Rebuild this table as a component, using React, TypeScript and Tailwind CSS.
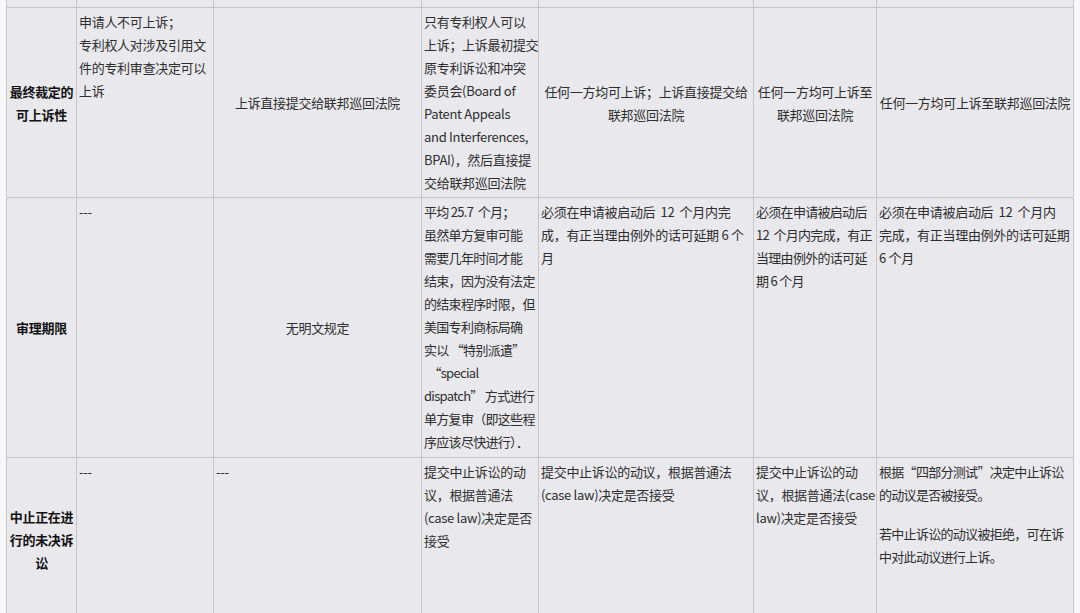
import type { ReactNode } from 'react'

const FONT = '"Noto Sans CJK SC", "Microsoft YaHei", "Liberation Sans", sans-serif'

type Align = 'top' | 'center'

function Cell({ children, align = 'top', center = false, bold = false, tight = false }: {
  children?: ReactNode
  align?: Align
  center?: boolean
  bold?: boolean
  tight?: boolean
}) {
  return (
    <div
      className={`bg-[#e9e8ed] px-[2px] flex flex-col overflow-hidden whitespace-pre ${
        align === 'center' ? 'justify-center' : 'justify-start pt-[2px]'
      } ${center ? 'items-center text-center' : 'items-start'} ${
        bold ? 'font-bold text-[#111]' : 'text-[#2e2e2e]'
      } ${tight ? 'tracking-[-0.7px]' : ''}`}
    >
      {children}
    </div>
  )
}

function Lines({ lines }: { lines: string[] }) {
  return (
    <div>
      {lines.map((l, i) => (
        <div key={i}>{l}</div>
      ))}
    </div>
  )
}

export default function App() {
  return (
    <div className="w-[1080px] h-[613px] overflow-hidden bg-[#f7f7f9]" style={{ fontFamily: FONT }}>
      <div className="ml-[6px] w-[1068px] border-x border-[#c6c6ca] bg-[#c6c6ca] grid grid-cols-[69px_136px_207px_116px_214px_122px_196px] grid-rows-[7px_189px_259px_162px] gap-px text-[13px] leading-[23px] tracking-[-0.3px]">
        {/* previous row (cut off) */}
        {[0, 1, 2, 3, 4, 5, 6].map(i => (
          <div key={i} className="bg-[#e9e8ed]" />
        ))}

        {/* 最终裁定的可上诉性 */}
        <Cell align="center" center bold>
          <Lines lines={['最终裁定的', '可上诉性']} />
        </Cell>
        <Cell>
          <Lines lines={['申请人不可上诉；', '专利权人对涉及引用文', '件的专利审查决定可以', '上诉']} />
        </Cell>
        <Cell align="center" center>
          <Lines lines={['上诉直接提交给联邦巡回法院']} />
        </Cell>
        <Cell>
          <Lines
            lines={[
              '只有专利权人可以',
              '上诉；上诉最初提交',
              '原专利诉讼和冲突',
              '委员会(Board of',
              'Patent Appeals',
              'and Interferences,',
              'BPAI)，然后直接提',
              '交给联邦巡回法院',
            ]}
          />
        </Cell>
        <Cell align="center" center>
          <Lines lines={['任何一方均可上诉；上诉直接提交给', '联邦巡回法院']} />
        </Cell>
        <Cell align="center" center>
          <Lines lines={['任何一方均可上诉至', '联邦巡回法院']} />
        </Cell>
        <Cell align="center" center>
          <Lines lines={['任何一方均可上诉至联邦巡回法院']} />
        </Cell>

        {/* 审理期限 */}
        <Cell align="center" center bold>
          <Lines lines={['审理期限']} />
        </Cell>
        <Cell>
          <Lines lines={['---']} />
        </Cell>
        <Cell align="center" center>
          <Lines lines={['无明文规定']} />
        </Cell>
        <Cell tight>
          <Lines
            lines={[
              '平均 25.7  个月；',
              '虽然单方复审可能',
              '需要几年时间才能',
              '结束，因为没有法定',
              '的结束程序时限，但',
              '美国专利商标局确',
              '实以 “特别派遣”',
              '  “special',
              'dispatch” 方式进行',
              '单方复审（即这些程',
              '序应该尽快进行）．',
            ]}
          />
        </Cell>
        <Cell>
          <Lines lines={['必须在申请被启动后  12  个月内完', '成，有正当理由例外的话可延期 6 个', '月']} />
        </Cell>
        <Cell tight>
          <Lines lines={['必须在申请被启动后', '12  个月内完成，有正', '当理由例外的话可延', '期 6 个月']} />
        </Cell>
        <Cell>
          <Lines lines={['必须在申请被启动后  12  个月内', '完成，有正当理由例外的话可延期', '6 个月']} />
        </Cell>

        {/* 中止正在进行的未决诉讼 */}
        <Cell align="center" center bold>
          <Lines lines={['中止正在进', '行的未决诉', '讼']} />
        </Cell>
        <Cell>
          <Lines lines={['---']} />
        </Cell>
        <Cell>
          <Lines lines={['---']} />
        </Cell>
        <Cell>
          <Lines lines={['提交中止诉讼的动', '议，根据普通法', '(case law)决定是否', '接受']} />
        </Cell>
        <Cell>
          <Lines lines={['提交中止诉讼的动议，根据普通法', '(case law)决定是否接受']} />
        </Cell>
        <Cell>
          <Lines lines={['提交中止诉讼的动', '议，根据普通法(case', 'law)决定是否接受']} />
        </Cell>
        <Cell tight>
          <div className="flex flex-col gap-[16px]">
            <Lines lines={['根据“四部分测试”决定中止诉讼', '的动议是否被接受。']} />
            <Lines lines={['若中止诉讼的动议被拒绝，可在诉', '中对此动议进行上诉。']} />
          </div>
        </Cell>
      </div>
    </div>
  )
}
